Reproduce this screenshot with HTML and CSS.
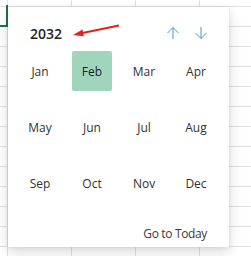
FILE: index.html
```html
<!DOCTYPE html>
<html lang="en">
<head>
  <meta charset="UTF-8">
  <title>Month Picker</title>
  <link rel="stylesheet" href="styles.css">
</head>
<body>
  <div class="sheet">
    <div class="active-cell"></div>

    <div class="picker">
      <div class="picker-header">
        <span class="year">2032</span>
        <div class="nav">
          <button class="nav-btn" title="Previous year">
            <svg width="14" height="14" viewBox="0 0 14 14"><path d="M7 13V1.5M1.5 7L7 1.5L12.5 7" fill="none" stroke="#3f97dc" stroke-width="1"/></svg>
          </button>
          <button class="nav-btn" title="Next year">
            <svg width="14" height="14" viewBox="0 0 14 14"><path d="M7 1V12.5M1.5 7L7 12.5L12.5 7" fill="none" stroke="#3f97dc" stroke-width="1"/></svg>
          </button>
        </div>
      </div>
      <div class="months">
        <div class="month">Jan</div>
        <div class="month selected">Feb</div>
        <div class="month">Mar</div>
        <div class="month">Apr</div>
        <div class="month">May</div>
        <div class="month">Jun</div>
        <div class="month">Jul</div>
        <div class="month">Aug</div>
        <div class="month">Sep</div>
        <div class="month">Oct</div>
        <div class="month">Nov</div>
        <div class="month">Dec</div>
      </div>
      <div class="picker-footer">
        <span class="today-link">Go to Today</span>
      </div>
    </div>

    <!-- annotation arrow pointing at the year -->
    <svg class="annotation" width="48" height="16" viewBox="0 0 48 16">
      <path d="M47 1.5L8 9.5" stroke="#e4201c" stroke-width="1.8" fill="none"/>
      <path d="M1 11L10.5 5.5L11.8 12.3Z" fill="#e4201c"/>
    </svg>
  </div>
</body>
</html>
```

FILE: styles.css
```css
body {
  margin: 0;
  background-color: #ffffff;
  font-family: 'Segoe UI', 'Open Sans', sans-serif;
  color: #323130;
  overflow: hidden;
}
.sheet {
  position: relative;
  width: 251px;
  height: 256px;
  background-color: #ffffff;
  background-image:
    linear-gradient(to bottom, #e1e1e1 1px, transparent 1px),
    linear-gradient(to right, #e1e1e1 1px, transparent 1px);
  background-size: 100% 20px, 64px 100%;
  background-position: 0 6px, 7px 0;
}
.active-cell {
  position: absolute;
  left: -2px;
  top: 5px;
  width: 8px;
  height: 20px;
  border-right: 2px solid #217346;
  border-bottom: 2px solid #217346;
}
.picker {
  position: absolute;
  left: 8px;
  top: 7px;
  width: 221px;
  height: 240px;
  box-sizing: border-box;
  padding: 8px 13px 0 12px;
  background-color: #ffffff;
  box-shadow: 0 6px 14px rgba(0, 0, 0, 0.13), 0 1px 4px rgba(0, 0, 0, 0.1);
}
.picker-header {
  display: flex;
  align-items: center;
  justify-content: space-between;
  height: 36px;
  padding-left: 10px;
}
.year {
  font-size: 14px;
  font-weight: 600;
  color: #252423;
}
.nav {
  display: flex;
  margin-right: 1px;
}
.nav-btn {
  width: 28px;
  height: 28px;
  padding: 0;
  border: none;
  background: none;
  display: flex;
  align-items: center;
  justify-content: center;
}
.months {
  display: grid;
  grid-template-columns: repeat(4, 40px);
  grid-auto-rows: 40px;
  column-gap: 12px;
  row-gap: 16px;
}
.month {
  display: flex;
  align-items: center;
  justify-content: center;
  font-size: 12px;
  border-radius: 2px;
}
.month.selected {
  background-color: #9fd6bb;
  color: #201f1e;
}
.picker-footer {
  margin-top: 19px;
  padding-right: 9px;
  text-align: right;
  line-height: 20px;
}
.today-link {
  font-size: 12px;
  letter-spacing: -0.35px;
  color: #3b3a39;
}
.annotation {
  position: absolute;
  left: 72px;
  top: 24px;
}
```
